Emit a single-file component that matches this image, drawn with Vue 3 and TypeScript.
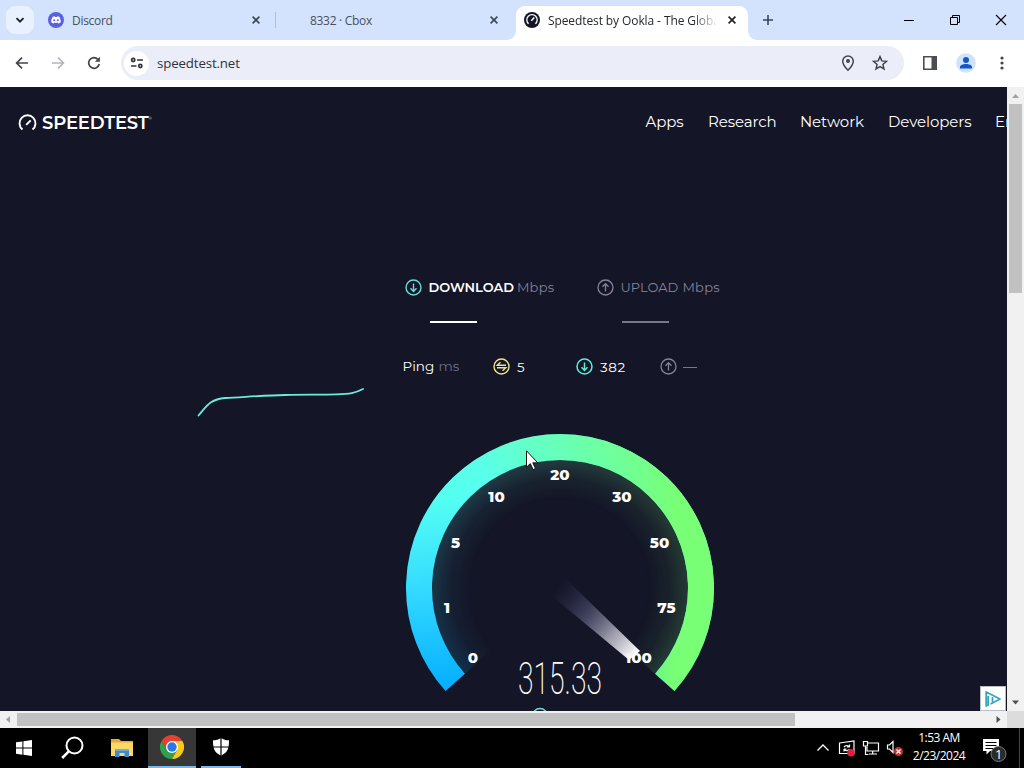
<script setup lang="ts">
interface Tick {
  label: string
  x: number
  y: number
}

const navLinks = ['Apps', 'Research', 'Network', 'Developers', 'English']

// positions inside the 320x290 gauge viewBox
const ticks: Tick[] = [
  { label: '0', x: 73, y: 238 },
  { label: '1', x: 47, y: 188 },
  { label: '5', x: 55.5, y: 123 },
  { label: '10', x: 96.5, y: 77 },
  { label: '20', x: 160, y: 55 },
  { label: '30', x: 222, y: 77 },
  { label: '50', x: 259.5, y: 123 },
  { label: '75', x: 266.5, y: 188 },
  { label: '100', x: 238.5, y: 238 },
]
</script>

<template>
  <div class="desktop">
    <div class="tab-strip">
      <button class="tab-search" aria-label="Search tabs">
        <svg width="12" height="12" viewBox="0 0 12 12"><path d="M2.5 4.2 6 7.7l3.500-3.500" fill="none" stroke="#1f2227" stroke-width="1.900" /></svg>
      </button>
      <div class="tab tab-discord">
        <svg class="favicon" width="16" height="16" viewBox="0 0 16 16">
          <circle cx="8" cy="8" r="8" fill="#5b60df" />
          <path d="M4.800 4.800 6.800 4.200 7.200 4.900h1.600l.4-.7 2 .6c1.100 1.700 1.700 3.600 1.500 5.500-.7.6-1.500 1-2.400 1.300l-.6-1c-1.100.4-2.300.4-3.400 0l-.6 1c-.9-.3-1.700-.7-2.400-1.300-.2-2 .4-3.900 1.500-5.500Z" fill="#fff" />
          <circle cx="6.200" cy="8.300" r="1" fill="#5b60df" />
          <circle cx="9.800" cy="8.300" r="1" fill="#5b60df" />
        </svg>
        <span class="tab-title">Discord</span>
        <svg class="tab-close" width="8" height="8" viewBox="0 0 8 8"><path d="m.6.6 6.800 6.800M7.400.6.600 7.400" stroke="#3c4654" stroke-width="1.600" /></svg>
      </div>
      <span class="tab-divider"></span>
      <div class="tab tab-cbox">
        <span class="tab-title">8332 · Cbox</span>
        <svg class="tab-close" width="8" height="8" viewBox="0 0 8 8"><path d="m.6.6 6.800 6.800M7.400.6.600 7.400" stroke="#3c4654" stroke-width="1.600" /></svg>
      </div>
      <div class="tab tab-active">
        <svg class="favicon" width="16" height="16" viewBox="0 0 16 16">
          <circle cx="8" cy="8" r="8" fill="#141526" />
          <path d="M4.600 11.800a5.200 5.200 0 1 1 6.800 0" fill="none" stroke="#fff" stroke-width="1.300" />
          <path d="m7.300 8.800 3-3.200" stroke="#fff" stroke-width="1.500" />
        </svg>
        <span class="tab-title faded">Speedtest by Ookla - The Global</span>
        <svg class="tab-close" width="8" height="8" viewBox="0 0 8 8"><path d="m.6.6 6.800 6.800M7.400.6.600 7.400" stroke="#1f2227" stroke-width="1.700" /></svg>
      </div>
      <svg class="new-tab" width="12" height="12" viewBox="0 0 12 12"><path d="M6 1v10M1 6h10" stroke="#3c4654" stroke-width="1.600" /></svg>
      <div class="window-controls">
        <svg width="12" height="12" viewBox="0 0 12 12"><path d="M1 6.500h10" stroke="#000" /></svg>
        <svg width="12" height="12" viewBox="0 0 12 12"><path d="M1.500 3.500h7v7h-7zM3.500 3.500v-2h7v7h-2" fill="none" stroke="#000" /></svg>
        <svg width="12" height="12" viewBox="0 0 12 12"><path d="m1 1 10 10M11 1 1 11" stroke="#000" stroke-width="1.100" /></svg>
      </div>
    </div>

    <div class="toolbar">
      <svg width="16" height="16" viewBox="0 0 16 16"><path d="M14 8H3M8 2.600 2.600 8 8 13.400" fill="none" stroke="#42464b" stroke-width="1.700" /></svg>
      <svg width="16" height="16" viewBox="0 0 16 16"><path d="M2 8h11M8 2.600 13.400 8 8 13.400" fill="none" stroke="#b4b6ba" stroke-width="1.700" /></svg>
      <svg width="16" height="16" viewBox="0 0 16 16"><path d="M13.200 9A5.300 5.300 0 1 1 12 4.500" fill="none" stroke="#42464b" stroke-width="1.700" /><path d="M13.900 1.800v5H8.900Z" fill="#42464b" /></svg>
      <div class="omnibox">
        <span class="site-info">
          <svg width="14" height="14" viewBox="0 0 14 14" fill="none" stroke="#2f3338" stroke-width="1.700"><circle cx="3.200" cy="4" r="1.600" /><path d="M7 4h6M1 10h5.500" /><circle cx="10.300" cy="10" r="1.600" /></svg>
        </span>
        <span class="url">speedtest.net</span>
        <svg class="pin" width="16" height="18" viewBox="0 0 16 18"><path d="M8 16.200C4.500 12.700 2.700 10 2.700 7.200a5.300 5.300 0 0 1 10.600 0c0 2.800-1.800 5.500-5.300 9Z" fill="none" stroke="#42464b" stroke-width="1.500" /><circle cx="8" cy="7" r="2" fill="#42464b" /></svg>
        <svg class="star" width="16" height="16" viewBox="0 0 16 16"><path d="m8 1.600 1.800 4.300 4.700.4-3.600 3.100 1.100 4.600L8 11.600 4 14l1.100-4.600-3.600-3.100 4.700-.4Z" fill="none" stroke="#42464b" stroke-width="1.500" /></svg>
      </div>
      <svg class="panel-icon" width="16" height="16" viewBox="0 0 16 16"><path d="M1.800 1.800h12.400v12.400H1.800z" fill="none" stroke="#4b4e53" stroke-width="1.600" /><path d="M9.500 2H14v12H9.500z" fill="#4b4e53" /></svg>
      <svg class="avatar" width="20" height="20" viewBox="0 0 20 20"><circle cx="10" cy="10" r="9.800" fill="#d0e3fd" /><circle cx="10" cy="6.900" r="3" fill="#1757c4" /><path d="M4 15.500v-1.700c0-1.900 3-2.900 6-2.900s6 1 6 2.900v1.700Z" fill="#1757c4" /></svg>
      <svg class="kebab" width="4" height="16" viewBox="0 0 4 16" fill="#42464b"><circle cx="2" cy="3" r="1.600" /><circle cx="2" cy="8" r="1.600" /><circle cx="2" cy="13" r="1.600" /></svg>
    </div>

    <div class="viewport">
      <main class="page">
        <header class="site-header">
          <div class="logo">
            <svg width="19" height="18" viewBox="0 0 19 18" fill="none" stroke="#fff"><path d="M4.500 15.500a8 8 0 1 1 10 0" stroke-width="1.900" /><path d="m8.200 10.800 4.500-4.500" stroke-width="1.900" /></svg>
            <span class="logo-text">SPEEDTEST</span><span class="mark">®</span>
          </div>
          <nav>
            <a v-for="link in navLinks" :key="link" :class="`nav-${link.toLowerCase()}`">{{ link }}</a>
          </nav>
        </header>

        <div class="stage">
          <svg class="speed-chart" width="170" height="32" viewBox="0 0 170 32">
            <path d="M3.500 29.500C12 20 14.500 13.500 30 12C50 11 72 9.200 90 9C112 8.300 126 9 141 8.400C155 7.800 160 7.200 168 3" fill="none" stroke="#6cebdc" stroke-width="1.800" stroke-linecap="round" />
          </svg>

          <div class="results">
            <div class="speeds">
              <section class="speed download">
                <div class="speed-label">
                  <svg width="17" height="17" viewBox="0 0 17 17" fill="none" stroke="#6bddd6" stroke-width="1.400"><circle cx="8.500" cy="8.500" r="7.500" /><path d="M8.500 4.500v8M5.500 9.300l3 3.100 3-3.100" /></svg>
                  <span class="name">DOWNLOAD</span><span class="unit">Mbps</span>
                </div>
                <span class="dash"></span>
              </section>
              <section class="speed upload">
                <div class="speed-label">
                  <svg width="17" height="17" viewBox="0 0 17 17" fill="none" stroke="#85849a" stroke-width="1.300"><circle cx="8.500" cy="8.500" r="7.500" /><path d="M8.500 12.500v-8M5.500 7.700l3-3.100 3 3.100" /></svg>
                  <span class="name">UPLOAD</span><span class="unit">Mbps</span>
                </div>
                <span class="dash"></span>
              </section>
            </div>

            <div class="pings">
              <span class="ping-label">Ping</span><span class="ping-unit">ms</span>
              <svg class="idle" width="17" height="17" viewBox="0 0 17 17" fill="none" stroke="#eee38d" stroke-width="1.400"><circle cx="8.500" cy="8.500" r="7.500" /><path d="M13 7.300H4.200l3.300-3M4 9.800h8.800l-3.300 3" /></svg>
              <span class="ping-value">5</span>
              <svg class="down" width="17" height="17" viewBox="0 0 17 17" fill="none" stroke="#5deddf" stroke-width="1.500"><circle cx="8.500" cy="8.500" r="7.500" /><path d="M8.500 4.500v8M5.500 9.300l3 3.100 3-3.100" /></svg>
              <span class="ping-value">382</span>
              <svg class="up" width="17" height="17" viewBox="0 0 17 17" fill="none" stroke="#85849a" stroke-width="1.300"><circle cx="8.500" cy="8.500" r="7.500" /><path d="M8.500 12.500v-8M5.500 7.700l3-3.100 3 3.100" /></svg>
              <span class="ping-empty"></span>
            </div>

            <svg class="gauge" width="320" height="290" viewBox="0 0 320 290">
              <defs>
                <linearGradient id="blue" gradientUnits="userSpaceOnUse" x1="80" y1="262" x2="60" y2="9">
                  <stop offset="0" stop-color="#04aeff" />
                  <stop offset="0.400" stop-color="#34daff" />
                  <stop offset="0.750" stop-color="#54fff2" />
                  <stop offset="1" stop-color="#62ffdc" />
                </linearGradient>
                <linearGradient id="green" gradientUnits="userSpaceOnUse" x1="85" y1="0" x2="275" y2="0">
                  <stop offset="0" stop-color="#78ff76" stop-opacity="0" />
                  <stop offset="0.750" stop-color="#78ff76" stop-opacity="0.750" />
                  <stop offset="1" stop-color="#78ff76" />
                </linearGradient>
                <radialGradient id="fade" gradientUnits="userSpaceOnUse" cx="160" cy="163" r="129">
                  <stop offset="0.680" stop-color="#fff" stop-opacity="0" />
                  <stop offset="0.850" stop-color="#fff" stop-opacity="0.060" />
                  <stop offset="1" stop-color="#fff" stop-opacity="0.170" />
                </radialGradient>
                <mask id="glow"><path d="M64.300 249.500A129 129 0 1 1 255.700 249.500L160 163Z" fill="url(#fade)" /></mask>
                <linearGradient id="needle" gradientUnits="userSpaceOnUse" x1="158" y1="162" x2="235" y2="231">
                  <stop offset="0" stop-color="#45467a" stop-opacity="0" />
                  <stop offset="0.350" stop-color="#66678e" stop-opacity="0.450" />
                  <stop offset="0.700" stop-color="#b5b5c4" stop-opacity="0.850" />
                  <stop offset="1" stop-color="#fff" />
                </linearGradient>
              </defs>
              <g mask="url(#glow)">
                <circle cx="160" cy="163" r="129" fill="url(#blue)" />
                <circle cx="160" cy="163" r="129" fill="url(#green)" />
              </g>
              <g fill="none" stroke-width="26">
                <path d="M55.200 257.400A141 141 0 1 1 264.800 257.400" stroke="url(#blue)" />
                <path d="M55.200 257.400A141 141 0 1 1 264.800 257.400" stroke="url(#green)" />
              </g>
              <text v-for="tick in ticks" :key="tick.label" class="tick" :x="tick.x" :y="tick.y">{{ tick.label }}</text>
              <path d="M152 171 167 155 240 226 229 235Z" fill="url(#needle)" />
              <text class="reading" x="118" y="269" textLength="84" lengthAdjust="spacingAndGlyphs">315.33</text>
              <circle cx="140" cy="291" r="7.500" fill="none" stroke="#6bddd6" stroke-width="1.400" />
            </svg>
          </div>
        </div>

        <div class="ad-choice">
          <svg width="18" height="18" viewBox="0 0 18 18" fill="none" stroke="#35a8bd" stroke-width="1.800" stroke-linejoin="round"><path d="M6.500 14 16 9 2.200 2v14l2-1V6" /><path d="M8.500 7v5" /></svg>
        </div>
      </main>
      <div class="scroll-y">
        <svg width="17" height="17" viewBox="0 0 17 17"><path d="m5 11 3.500-4 3.500 4Z" fill="#a0a0a0" /></svg>
        <span class="thumb-y"></span>
        <svg class="arrow-down" width="17" height="17" viewBox="0 0 17 17"><path d="m5 6.500 3.500 4 3.500-4Z" fill="#505050" /></svg>
      </div>
      <div class="scroll-x">
        <svg width="17" height="17" viewBox="0 0 17 17"><path d="M10 5 6 8.500l4 3.500Z" fill="#a0a0a0" /></svg>
        <span class="thumb-x"></span>
        <svg class="arrow-right" width="17" height="17" viewBox="0 0 17 17"><path d="m6.500 5 4 3.500-4 3.500Z" fill="#505050" /></svg>
      </div>
      <div class="corner"></div>
    </div>

    <footer class="taskbar">
      <div class="task"><svg width="16" height="16" viewBox="0 0 16 16" fill="#fff"><path d="M0 2.300 6.400 1.400V7.500H0ZM7.400 1.200 16 0v7.500H7.400ZM0 8.500h6.400v6.200L0 13.700ZM7.400 8.500H16V16l-8.600-1.200Z" /></svg></div>
      <div class="task"><svg width="24" height="24" viewBox="0 0 24 24" fill="none" stroke="#fff" stroke-width="2"><circle cx="13.500" cy="9.500" r="8" /><path d="M8 15.200 1.200 22" stroke-width="2.600" /></svg></div>
      <div class="task">
        <svg width="22" height="20" viewBox="0 0 22 20"><path d="M0 1h8l2 2h12v15H0Z" fill="#e9a93a" /><path d="M0 4.500h22V18H0Z" fill="#fbd867" /><path d="M4 19v-8h14v8h-4.500v-4h-5v4Z" fill="#4389c5" /><path d="M4 11h14v2H4z" fill="#68aee0" /></svg>
      </div>
      <div class="task focused">
        <svg width="24" height="24" viewBox="0 0 24 24">
          <path d="M12 12 17.200 15 12 24A12 12 0 0 1 1.600 6L6.800 15Z" fill="#2da14c" />
          <path d="M12 6h10.400A12 12 0 0 1 12 24l5.200-9Z" fill="#fbc91e" />
          <path d="M1.600 6A12 12 0 0 1 22.400 6H12l-5.200 9Z" fill="#e34133" />
          <circle cx="12" cy="12" r="6" fill="#fff" /><circle cx="12" cy="12" r="4.700" fill="#2878e8" />
        </svg>
      </div>
      <div class="task open">
        <svg width="18" height="18" viewBox="0 0 18 18"><path d="M9 0c2.500 1.800 5 2.300 8 2.300 0 8-1 12-8 15.400C2 14.300 1 10.300 1 2.300 4 2.300 6.500 1.800 9 0Z" fill="#fff" /><path d="M9 0v18M0 9h18" stroke="#000" stroke-width="1.200" /></svg>
      </div>
      <div class="tray">
        <svg width="14" height="18" viewBox="0 0 14 18"><path d="m1.500 11.500 5.500-5.500 5.500 5.500" fill="none" stroke="#fff" stroke-width="1.300" /></svg>
        <svg class="sync" width="18" height="18" viewBox="0 0 18 18" fill="none" stroke="#fff" stroke-width="1.200"><path d="M1.500 4 16 2v12.500H1.500Z" /><path d="M6 8.200c1-2.200 4.500-2.200 5.500 0V5.500M11.500 10c-1 2.200-4.500 2.200-5.500 0v2.500M9 8h2.500M6 10h2.500" /><circle cx="13" cy="13.700" r="3.800" fill="#e0203c" stroke="none" /></svg>
        <svg class="network" width="18" height="18" viewBox="0 0 18 18" fill="none" stroke="#fff" stroke-width="1.200"><path d="M6 4h10.500v8H5V8M10.700 12v3M7 15h8M1.500 2.500h4V7h-4zM3.500 7v8.500h3" /></svg>
        <svg class="volume" width="18" height="18" viewBox="0 0 18 18" fill="none" stroke="#fff" stroke-width="1.200"><path d="M1.500 6h2L7 2.500v11L3.500 10h-2Z" /><circle cx="12.500" cy="12.500" r="4.500" fill="#c9302c" stroke="none" /><path d="m10.500 10.500 4 4m0-4-4 4" stroke-width="1.400" /></svg>
        <div class="clock"><span>1:53 AM</span><span>2/23/2024</span></div>
        <div class="notifications">
          <svg width="26" height="26" viewBox="0 0 26 26"><path d="M2 2h16v12H9l-3.500 3.500V14H2Z" fill="#fff" /><path d="M4.500 5.500h11M4.500 8.500h11M4.500 11.500h8" stroke="#000" /><circle cx="17.500" cy="17" r="7.500" fill="#2b2b2b" stroke="#777" /></svg>
          <span class="badge">1</span>
        </div>
        <span class="show-desktop"></span>
      </div>
    </footer>

    <svg class="cursor" width="13" height="21" viewBox="0 0 13 21"><path d="M.5.800v16.400l3.800-3.600 2.800 6 2.400-1.100-2.700-5.700h5Z" fill="#fff" stroke="#111" /></svg>
  </div>
</template>

<style>
body { margin: 0; overflow: hidden; }
</style>

<style scoped>
* { box-sizing: border-box; }
svg { display: block; flex: none; }

.desktop {
  position: relative;
  display: flex;
  flex-direction: column;
  width: 1024px;
  height: 768px;
  overflow: hidden;
  font-family: "Open Sans", "Noto Sans", sans-serif;
}

/* browser chrome */
.tab-strip { display: flex; height: 40px; background: #d3e3fd; }
.tab-search {
  display: flex;
  align-items: center;
  justify-content: center;
  width: 28px;
  height: 28px;
  margin: 6px 0 0 6px;
  padding: 0;
  border: 0;
  border-radius: 9px;
  background: #e9f1fe;
}
.tab { display: flex; align-items: center; height: 40px; font-size: 12px; color: #46505f; }
.tab-title { padding-top: 1px; white-space: nowrap; line-height: 18px; }
.tab-discord { width: 241px; padding: 0 15px 0 14px; }
.tab-discord .tab-title { margin-left: 8px; letter-spacing: -0.3px; }
.tab-close { margin-left: auto; }
.tab-divider { width: 1px; height: 16px; margin-top: 12px; background: #a5c0e6; }
.tab-cbox { width: 240px; padding: 0 18px 0 34px; letter-spacing: -0.3px; }
.tab-active {
  position: relative;
  height: 34px;
  width: 232px;
  margin-top: 6px;
  padding: 0 12px 6px 8px;
  border-radius: 9px 9px 0 0;
  background: #fff;
  color: #25282c;
}
.tab-active::before,
.tab-active::after {
  content: "";
  position: absolute;
  bottom: 0;
  width: 9px;
  height: 9px;
}
.tab-active::before { left: -9px; background: radial-gradient(circle at 0 0, transparent 8.5px, #fff 9px); }
.tab-active::after { right: -9px; background: radial-gradient(circle at 100% 0, transparent 8.5px, #fff 9px); }
.faded {
  width: 168px;
  margin-left: 8px;
  overflow: hidden;
  letter-spacing: -0.1px;
  mask-image: linear-gradient(90deg, #000 145px, transparent 170px);
}
.new-tab { margin: 14px 0 0 14px; }
.window-controls { display: flex; gap: 34px; margin: 14px 17px 0 auto; }

.toolbar { display: flex; align-items: center; height: 47px; padding: 0 20px 1px 14px; background: #fff; gap: 20px; }
.omnibox {
  display: flex;
  align-items: center;
  width: 783px;
  height: 34px;
  margin-left: -1px;
  padding: 0 16px 0 3px;
  border-radius: 17px;
  background: #ebeef8;
}
.site-info { display: flex; align-items: center; justify-content: center; width: 25px; height: 25px; border-radius: 50%; background: #fff; }
.url { margin-left: 8px; font-size: 13.3px; letter-spacing: -0.15px; color: #30343a; }
.pin { margin-left: auto; }
.star { margin-left: 16px; }
.panel-icon { margin-left: -2px; }
.avatar { margin-left: -2px; }
.kebab { margin-left: 4px; }

/* page */
.viewport { display: grid; grid-template: 624px 17px / 1007px 17px; }
.page {
  position: relative;
  overflow: hidden;
  background: #141526;
  color: #fff;
  font-family: "Montserrat", Inter, sans-serif;
}
.site-header { display: flex; height: 70px; padding-left: 18px; align-items: center; }
.logo { display: flex; align-items: center; width: 627.5px; padding-top: 1px; flex: none; }
.logo-text { margin-left: 5px; font: 600 18px "Montserrat", Lato, sans-serif; letter-spacing: -0.15px; }
.mark { align-self: flex-start; margin-top: 4px; font-size: 4px; }
nav { display: flex; gap: 24px; padding-bottom: 2px; font-size: 15px; letter-spacing: -0.08px; white-space: nowrap; }
nav a { flex: none; }
.nav-apps { width: 38.5px; }
.nav-research { width: 68px; }
.nav-network { width: 64px; }
.nav-developers { width: 83px; }

.stage { display: flex; }
.speed-chart { margin: 229px 25px 0 195px; }
.results { padding-top: 122px; }
.speeds { display: flex; padding-left: 15px; }
.speed { width: 192px; }
.speed-label { display: flex; align-items: center; height: 17px; font-size: 13px; white-space: nowrap; }
.name { margin: -1px 0 0 6.5px; }
.unit { margin: -1px 0 0 4px; color: #85849a; letter-spacing: 0.2px; }
.download .name { width: 84.5px; font-weight: 600; }
.upload .name { width: 58px; color: #85849a; }
.dash { display: block; width: 47px; height: 2px; margin: 25px 0 0 24.5px; background: #fff; }
.upload .dash { background: #77778c; }

.pings { display: flex; align-items: center; height: 18px; margin-top: 34px; padding-left: 12.5px; font-size: 13.5px; }
.ping-label { width: 31px; }
.ping-unit { width: 21px; margin-left: 5px; color: #70708a; }
.idle { margin-left: 33.5px; }
.ping-value { margin: 2px 0 0 7px; letter-spacing: 0.4px; }
.down { margin-left: 51px; }
.down + .ping-value { width: 27px; letter-spacing: 0.6px; }
.up { margin-left: 33px; }
.ping-empty { width: 14px; height: 1px; margin: 3px 0 0 6px; background: #77778c; }

.gauge { margin: 50px 0 0 10px; }
.tick { font: 800 15px "Montserrat", Inter, sans-serif; fill: #fff; text-anchor: middle; }
.reading { font: 200 45px "Roboto", Inter, sans-serif; fill: #fff; }

.ad-choice {
  position: absolute;
  right: 1px;
  bottom: 0;
  display: flex;
  align-items: center;
  justify-content: center;
  width: 26px;
  height: 25px;
  border: 1px solid #b9bdc4;
  background: #fff;
}

.scroll-y { display: flex; flex-direction: column; background: #f1f1f1; }
.thumb-y { width: 13px; height: 189px; margin-left: 2px; background: #c1c1c1; }
.arrow-down { margin-top: auto; }
.scroll-x { display: flex; background: #f1f1f1; }
.thumb-x { width: 778px; height: 13px; margin-top: 2px; background: #c1c1c1; }
.arrow-right { margin-left: auto; }
.corner { background: #dcdcdc; }

/* taskbar */
.taskbar { display: flex; height: 40px; background: #000; color: #fff; }
.task { display: flex; align-items: center; justify-content: center; width: 48px; margin-right: 1px; }
.task.focused { width: 48px; margin-left: 1px; border-bottom: 2px solid #76b9ed; background: #373737; }
.task.open { width: 40px; margin-left: 4px; border-bottom: 2px solid #76b9ed; }
.tray { display: flex; align-items: center; margin-left: auto; }
.sync { margin-left: 8px; }
.network { margin-left: 6px; }
.volume { margin-left: 6px; }
.clock { display: flex; flex-direction: column; align-items: center; width: 62px; margin: -2px 0 0 4px; font-size: 12px; line-height: 18px; letter-spacing: -0.5px; }
.notifications { position: relative; margin: 4px 0 0 11px; }
.badge { position: absolute; left: 14px; top: 8px; font-size: 13px; line-height: 18px; }
.show-desktop { width: 1px; height: 40px; margin: 0 4px 0 12px; background: #444; }

.cursor { position: absolute; left: 526px; top: 450px; }
</style>
